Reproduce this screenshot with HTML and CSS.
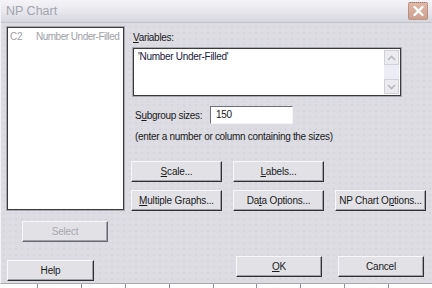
FILE: index.html
```html
<!DOCTYPE html>
<html lang="en">
<head>
  <meta charset="UTF-8" />
  <title>NP Chart</title>
  <link rel="stylesheet" href="styles.css">
</head>
<body>
  <div class="dialog">
    <div class="titlebar">
      <span class="title">NP Chart</span>
      <span class="close">
        <svg width="13" height="12" viewBox="0 0 13 12"><path d="M2.5 2 L10.5 10 M10.5 2 L2.5 10" stroke="#fff" stroke-width="2.4" stroke-linecap="round"/></svg>
      </span>
    </div>

    <div class="content">
      <div class="left">
        <div class="listbox">
          <div class="list-row"><span class="col">C2</span><span class="name">Number Under-Filled</span></div>
        </div>
        <button class="btn select" disabled>Select</button>
        <button class="btn help">Help</button>
      </div>

      <div class="right">
        <div class="label"><u>V</u>ariables:</div>
        <div class="textarea">
          <div class="value">'Number Under-Filled'</div>
          <div class="scrollbar">
            <span class="arrow">
              <svg width="9" height="6" viewBox="0 0 9 6"><path d="M1 5 L4.5 1.5 L8 5" fill="none" stroke="#b8b8c0" stroke-width="1.6"/></svg>
            </span>
            <span class="track"></span>
            <span class="arrow">
              <svg width="9" height="6" viewBox="0 0 9 6"><path d="M1 1 L4.5 4.5 L8 1" fill="none" stroke="#b8b8c0" stroke-width="1.6"/></svg>
            </span>
          </div>
        </div>

        <div class="subgroup">
          <span class="sub-label">S<u>u</u>bgroup sizes:</span>
          <div class="input">150</div>
        </div>
        <div class="hint">(enter a number or column containing the sizes)</div>

        <div class="btn-row first">
          <button class="btn"><u>S</u>cale...</button>
          <button class="btn"><u>L</u>abels...</button>
        </div>
        <div class="btn-row">
          <button class="btn"><u>M</u>ultiple Graphs...</button>
          <button class="btn">Da<u>t</u>a Options...</button>
          <button class="btn">NP Chart O<u>p</u>tions...</button>
        </div>

        <div class="actions">
          <button class="btn"><u>O</u>K</button>
          <button class="btn">Cancel</button>
        </div>
      </div>
    </div>
  </div>
  <div class="sheet">
    <span></span><span></span><span></span><span></span><span></span><span></span><span></span><span></span><span></span>
  </div>
</body>
</html>
```

FILE: styles.css
```css
body {
  margin: 0;
  width: 432px;
  height: 288px;
  overflow: hidden;
  font-family: 'Liberation Sans', Arial, sans-serif;
  font-size: 10px;
  letter-spacing: -0.3px;
  color: #1a1a1a;
  background: #fff;
  white-space: nowrap;
}

.dialog {
  height: 284px;
  border-left: 1px solid #f4f4f6;
  border-bottom: 1px solid #a8a8b0;
  background-color: #dcdce2;
  background-image: radial-gradient(circle, rgba(200, 200, 210, 0.7) 0.6px, transparent 0.8px);
  background-size: 6px 6px;
  box-sizing: border-box;
}

.titlebar {
  height: 23px;
  display: flex;
  align-items: center;
  justify-content: space-between;
  padding: 0 4px 0 5px;
  background: linear-gradient(#f4f4f8, #e6e6ec 55%, #d6d6de);
  border-bottom: 1px solid #c4c4cc;
  box-sizing: border-box;
}

.title {
  font-size: 12.5px;
  letter-spacing: 0;
  color: #a4a4ac;
}

.close {
  width: 20px;
  height: 18px;
  display: flex;
  align-items: center;
  justify-content: center;
  background: linear-gradient(#e0b8a8, #cca090);
  border: 1px dotted #9c7866;
  border-radius: 2px;
  box-sizing: border-box;
}

.content {
  display: flex;
  padding: 4px 0 0 6px;
}

.left {
  width: 117px;
  flex-shrink: 0;
  display: flex;
  flex-direction: column;
}

.listbox {
  height: 183px;
  background: #fff;
  border: 1px solid #3a3a3a;
  box-shadow: 0 0 0 1px #a8a8b0;
  box-sizing: border-box;
  padding: 3px 2px;
}

.list-row {
  display: flex;
  color: #a0a0a8;
}

.list-row .col {
  width: 26px;
  flex-shrink: 0;
}

.list-row .name {
  letter-spacing: -0.5px;
}

.btn {
  font-family: inherit;
  font-size: 10px;
  letter-spacing: -0.2px;
  color: #1a1a1a;
  height: 21px;
  padding: 0;
  background: #e2e2e6;
  border: 1px solid;
  border-color: #f8f8fa #303030 #303030 #f8f8fa;
  box-shadow: inset -1px -1px 0 #a0a0a8;
  cursor: pointer;
  white-space: nowrap;
}

.btn:disabled {
  color: #a8a8b0;
  border-color: #f8f8fa #686870 #686870 #f8f8fa;
}

.select {
  width: 86px;
  margin: 11px 0 0 15px;
}

.help {
  width: 87px;
  margin-top: 18px;
}

.right {
  width: 295px;
  margin-left: 7px;
  display: flex;
  flex-direction: column;
}

.label {
  margin: 4px 0 0 2px;
  line-height: 14px;
}

.textarea {
  width: 268px;
  height: 48px;
  margin: 3px 0 0 2px;
  display: flex;
  background: #fff;
  border: 1px solid #3a3a3a;
  box-shadow: 0 0 0 1px #a8a8b0;
  box-sizing: border-box;
  padding: 1px;
}

.value {
  flex: 1;
  padding: 1px 3px;
  color: #202040;
}

.scrollbar {
  width: 15px;
  display: flex;
  flex-direction: column;
}

.arrow {
  height: 15px;
  display: flex;
  align-items: center;
  justify-content: center;
  background: #ececf0;
  border: 1px solid #d0d0d8;
  box-sizing: border-box;
}

.track {
  flex: 1;
  background: #ececf4;
}

.subgroup {
  display: flex;
  align-items: center;
  margin: 10px 0 0 4px;
}

.sub-label {
  width: 75px;
  flex-shrink: 0;
}

.input {
  width: 83px;
  height: 18px;
  line-height: 16px;
  padding-left: 5px;
  background: #fff;
  border: 1px solid;
  border-color: #707078 #f4f4f6 #f4f4f6 #707078;
  box-sizing: border-box;
}

.hint {
  margin: 6px 0 0 4px;
  line-height: 13px;
}

.btn-row {
  display: flex;
  gap: 11px;
  margin-top: 8px;
}

.btn-row.first {
  margin-top: 18px;
}

.btn-row .btn {
  width: 91px;
}

.actions {
  display: flex;
  gap: 16px;
  margin: 45px 0 0 105px;
}

.actions .btn {
  width: 86px;
}

.sheet {
  height: 4px;
  display: flex;
  padding-left: 37px;
}

.sheet span {
  width: 53px;
  height: 4px;
  border-left: 1px solid #909098;
  box-sizing: border-box;
}
```
